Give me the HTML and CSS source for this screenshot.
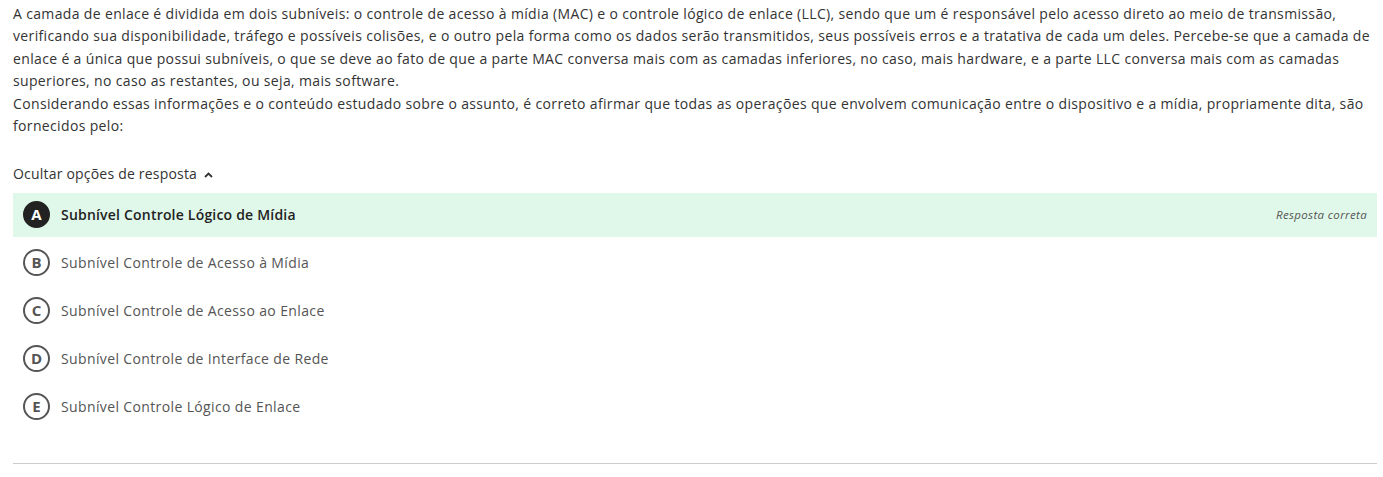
FILE: index.html
```html
<!DOCTYPE html>
<html lang="pt-BR">
<head>
<meta charset="utf-8">
<link rel="stylesheet" href="styles.css">
</head>
<body>
<main class="question">
  <p class="statement">A camada de enlace é dividida em dois subníveis: o controle de acesso à mídia (MAC) e o controle lógico de enlace (LLC), sendo que um é responsável pelo acesso direto ao meio de transmissão, verificando sua disponibilidade, tráfego e possíveis colisões, e o outro pela forma como os dados serão transmitidos, seus possíveis erros e a tratativa de cada um deles. Percebe-se que a camada de enlace é a única que possui subníveis, o que se deve ao fato de que a parte MAC conversa mais com as camadas inferiores, no caso, mais hardware, e a parte LLC conversa mais com as camadas superiores, no caso as restantes, ou seja, mais software.<br>Considerando essas informações e o conteúdo estudado sobre o assunto, é correto afirmar que todas as operações que envolvem comunicação entre o dispositivo e a mídia, propriamente dita, são fornecidos pelo:</p>

  <div class="toggle">Ocultar opções de resposta
    <svg class="chev" width="9" height="6" viewBox="0 0 9 6"><path d="M1 5 L4.5 1.5 L8 5" fill="none" stroke="#333" stroke-width="1.8"/></svg>
  </div>

  <ul class="options">
    <li class="option correct"><span class="letter">A</span><span class="label">Subnível Controle Lógico de Mídia</span><span class="tag">Resposta correta</span></li>
    <li class="option"><span class="letter">B</span><span class="label">Subnível Controle de Acesso à Mídia</span></li>
    <li class="option"><span class="letter">C</span><span class="label">Subnível Controle de Acesso ao Enlace</span></li>
    <li class="option"><span class="letter">D</span><span class="label">Subnível Controle de Interface de Rede</span></li>
    <li class="option"><span class="letter">E</span><span class="label">Subnível Controle Lógico de Enlace</span></li>
  </ul>

  <hr class="divider">
</main>
</body>
</html>
```

FILE: styles.css
```css
html, body {
  margin: 0;
  padding: 0;
  background: #fff;
}
body {
  font-family: "Open Sans", "Liberation Sans", sans-serif;
  color: #333;
}
.question {
  margin: 0 6px 0 13px;
  padding-top: 3px;
}
.statement {
  margin: 0;
  font-size: 14px;
  line-height: 22.4px;
  letter-spacing: 0.35px;
  color: #333;
}
.toggle {
  margin-top: 26px;
  font-size: 14px;
  line-height: 22px;
  letter-spacing: 0.2px;
  color: #333;
  display: flex;
  align-items: center;
  gap: 7px;
}
.chev {
  margin-top: 1px;
}
.options {
  list-style: none;
  margin: 8px 0 0 0;
  padding: 0;
  display: flex;
  flex-direction: column;
  gap: 4px;
}
.option {
  height: 44px;
  box-sizing: border-box;
  display: flex;
  align-items: center;
  padding: 0 10px 2px 10px;
  font-size: 14px;
  letter-spacing: 0.37px;
  color: #555;
}
.option.correct {
  background: #e0f8ea;
  color: #222;
}
.letter {
  width: 27px;
  height: 27px;
  box-sizing: border-box;
  border: 2px solid #555;
  border-radius: 50%;
  display: flex;
  align-items: center;
  justify-content: center;
  font-weight: 700;
  font-size: 15px;
  letter-spacing: 0;
  color: #555;
  margin-right: 11px;
}
.correct .letter {
  background: #222;
  border-color: #222;
  color: #fff;
}
.label {
  flex: 1;
}
.correct .label {
  font-weight: 600;
  letter-spacing: 0.2px;
}
.tag {
  font-style: italic;
  font-size: 11.5px;
  letter-spacing: 0.35px;
  color: #555;
  font-weight: 400;
}
.divider {
  margin: 34px 0 0 0;
  border: 0;
  border-top: 1px solid #ccc;
}
```
